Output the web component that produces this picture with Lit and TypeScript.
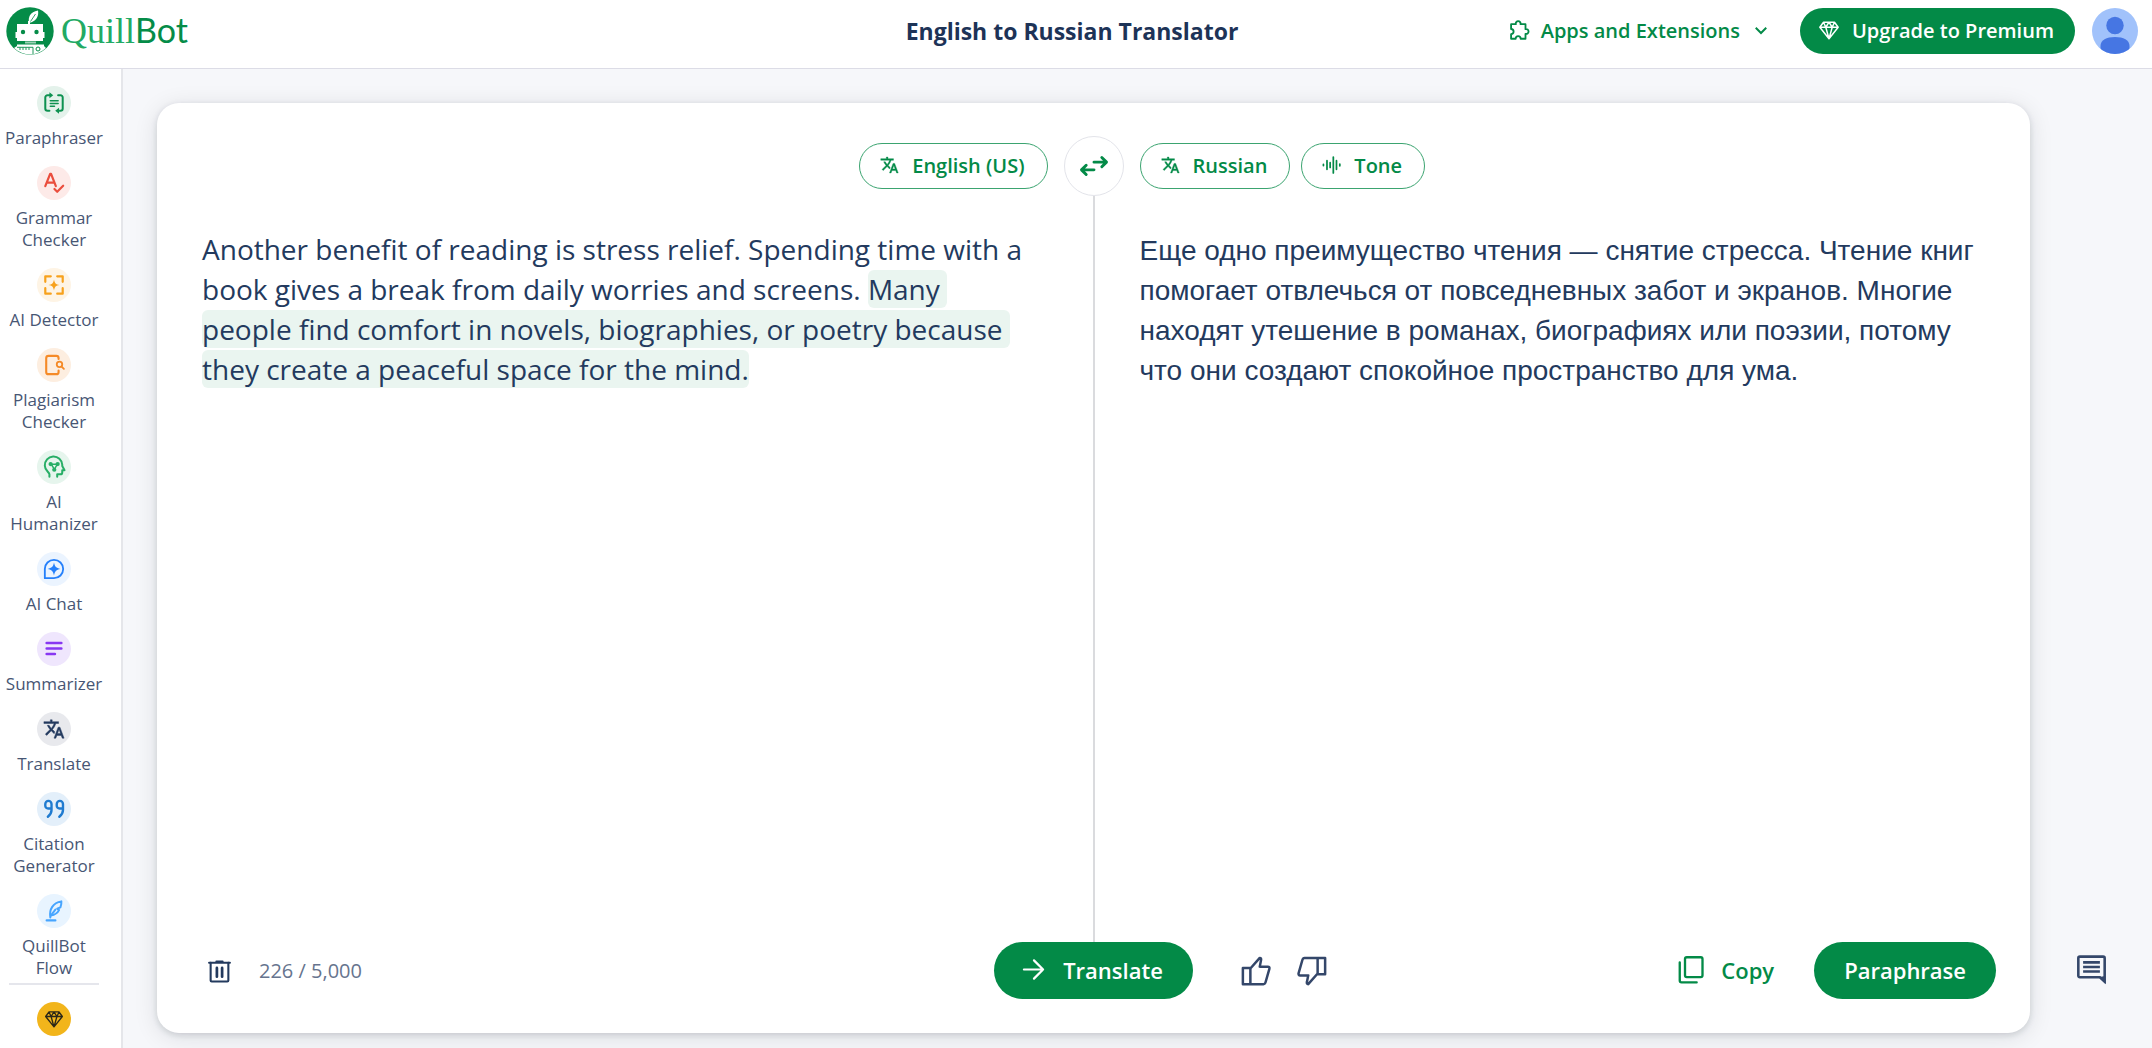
import { LitElement, html, css, svg, SVGTemplateResult } from "lit";
import { customElement, property } from "lit/decorators.js";
import { classMap } from "lit/directives/class-map.js";

const icons: Record<string, SVGTemplateResult> = {
  paraphrase: svg`<g fill="none" stroke="currentColor" stroke-width="2.200" stroke-linecap="round" stroke-linejoin="round"><path d="M8 3.500H5A2.500 2.500 0 0 0 2.500 6v12A2.500 2.500 0 0 0 5 20.500h2M16.500 3.500h2.500A2.500 2.500 0 0 1 21.500 6v12a2.500 2.500 0 0 1-2.500 2.500h-2"/><path d="M8 9.500h8.500M8 12.500h8.500M8 15.500h4.500" stroke-width="1.700"/></g><path d="M7 .2l4.200 3.300L7 6.800zM17.500 17.200l-4.200 3.300 4.200 3.300z" fill="currentColor"/>`,
  grammar: svg`<g fill="none" stroke="currentColor" stroke-width="2.400" stroke-linecap="round" stroke-linejoin="round"><path d="M2.500 15.500L7.800 2h1l5.200 13.500M4.500 11.500h7.500"/><path d="M12.500 18.500l3 3 6.500-6.500"/></g>`,
  detector: svg`<path d="M2.500 8.500v-6h6M15.500 2.500h6v6M21.500 15.500v6h-6M8.500 21.500h-6v-6" fill="none" stroke="currentColor" stroke-width="2.400" stroke-linejoin="round" stroke-linecap="round"/><path d="M12 6c.7 4 2 5.300 6 6-4 .7-5.300 2-6 6-.7-4-2-5.300-6-6 4-.7 5.300-2 6-6z" fill="currentColor"/>`,
  plagiarism: svg`<g fill="none" stroke="currentColor" stroke-width="2.300" stroke-linecap="round"><path d="M17 5.500V4.500A2.500 2.500 0 0 0 14.500 2H6a2.500 2.500 0 0 0-2.500 2.500v15A2.500 2.500 0 0 0 6 22h8.500a2.500 2.500 0 0 0 2.500-2.500v-1.500"/><circle cx="18" cy="11.300" r="3" stroke-width="2"/><path d="M20.300 13.700l2.500 2.500" stroke-width="2"/></g>`,
  humanizer: svg`<g fill="none" stroke="currentColor" stroke-width="2.200" stroke-linecap="round" stroke-linejoin="round"><path d="M7 22.500V20c0-2.500-5-4-5-9.500a9.500 9.500 0 0 1 19-1L21 11l2.500 4.500H21V18a2 2 0 0 1-2 2h-3.500v2.500"/><path d="M9 9h6.500M9 9l3.500 5.500 3-5.500" stroke-width="1.600"/></g><g fill="currentColor"><circle cx="8.300" cy="8.800" r="2.300"/><circle cx="16" cy="8.800" r="2.300"/><circle cx="12.300" cy="15" r="2.300"/></g>`,
  chat: svg`<path d="M2 22V12a10 10 0 1 1 10 10z" fill="none" stroke="currentColor" stroke-width="2" stroke-linejoin="round"/><path d="M12 5c1 4.600 2.400 6 7 7-4.600 1-6 2.400-7 7-1-4.600-2.400-6-7-7 4.600-1 6-2.400 7-7z" fill="currentColor"/>`,
  summarize: svg`<path d="M4 5.500h16M4 11.500h16M4 17.500h9" fill="none" stroke="currentColor" stroke-width="2.800" stroke-linecap="round"/>`,
  translate: svg`<path fill="currentColor" stroke="currentColor" stroke-width=".5" d="M12.870 15.070l-2.540-2.510.03-.03A17.520 17.520 0 0 0 14.070 6H17V4h-7V2H8v2H1v1.990h11.170C11.500 7.920 10.440 9.750 9 11.350 8.070 10.320 7.300 9.190 6.690 8h-2c.73 1.630 1.730 3.170 2.980 4.560l-5.090 5.020L4 19l5-5 3.110 3.110.76-2.040zM18.500 10h-2L12 22h2l1.120-3h4.750L21 22h2l-4.500-12zm-2.620 7l1.620-4.330L19.120 17h-3.240z"/>`,
  cite: svg`<g fill="none" stroke="currentColor" stroke-width="2.600" stroke-linecap="round"><path d="M9 11.500H5.500a3 3 0 0 1-3-3V6.500a3.300 3.300 0 0 1 6.800 0V13c0 4-1.500 5.500-4 7.500"/><path d="M21.500 11.500H18a3 3 0 0 1-3-3V6.500a3.300 3.300 0 0 1 6.800 0V13c0 4-1.500 5.500-4 7.500"/></g>`,
  flow: svg`<g fill="none" stroke="currentColor" stroke-width="2.200" stroke-linecap="round" stroke-linejoin="round"><path d="M8 19C6.500 10 11 3 20 1.500c.3 3-.2 4.500-1 6.500L15.500 9.500l2 1.500c-1.500 3-4 5-9 6"/><path d="M8.500 17l5-6.500"/><path d="M4 22.300h9.500" stroke-width="2.400"/></g>`,
  diamond: svg`<path d="M6 3.500h12l4 5.500-10 12.500L2 9zM2 9h20M6 3.500L8.500 9 12 3.500 15.500 9 18 3.500M8.500 9l3.500 12.500L15.500 9" fill="none" stroke="currentColor" stroke-width="1.600" stroke-linejoin="round"/>`,
  puzzle: svg`<path d="M2.500 5h5.700a2.900 2.900 0 1 1 5.600 0h6v6a2.900 2.900 0 1 1 0 5.600V22.500H14c0-4.300-6-4.300-6 0H2.500V17c4-.2 4-6 0-6.200z" fill="none" stroke="currentColor" stroke-width="2.200" stroke-linejoin="round"/>`,
  chevron: svg`<path d="M5 9l7 7 7-7" fill="none" stroke="currentColor" stroke-width="2.600"/>`,
  swap: svg`<path d="M12 8.700h10.500M18.700 4.700l4 4-4 4M12 15.300H1.500M5.300 11.300l-4 4 4 4" fill="none" stroke="currentColor" stroke-width="2.500" stroke-linecap="round" stroke-linejoin="round"/>`,
  tone: svg`<path d="M1.800 11.300v1.400M6.300 6.500v11M10.300 9v6M14.300 2v20M18.300 6.500v11M22.500 11v2" fill="none" stroke="currentColor" stroke-width="2.200" stroke-linecap="round"/>`,
  trash: svg`<g fill="none" stroke="currentColor" stroke-width="2" stroke-linejoin="round" stroke-linecap="round"><path d="M2 4h20M9 3h6"/><path d="M3.500 4v17a1 1 0 0 0 1 1h15a1 1 0 0 0 1-1V4"/><path d="M9.500 9v8.500M14.500 9v8.500" stroke-width="2.600"/></g>`,
  arrow: svg`<path d="M2 12h20M12.500 2.500L22 12l-9.500 9.500" fill="none" stroke="currentColor" stroke-width="2.300" stroke-linecap="round" stroke-linejoin="round"/>`,
  up: svg`<path d="M1.500 9.500h6v13h-6zM7.500 10L15 1.500c1 0 1.300.7 1 2L15 8.500h6.500c1 0 1.500.8 1.200 1.800l-3 10.500c-.3 1.100-.7 1.700-1.700 1.700H7.500z" fill="none" stroke="currentColor" stroke-width="2" stroke-linejoin="round"/>`,
  copy: svg`<path d="M7.500 1.500h12a1.500 1.500 0 0 1 1.500 1.500v14a1.500 1.500 0 0 1-1.500 1.500h-12A1.500 1.500 0 0 1 6 17V3a1.500 1.500 0 0 1 1.500-1.500zM1.500 6v15.500A1.500 1.500 0 0 0 3 23h13" fill="none" stroke="currentColor" stroke-width="2" stroke-linecap="round"/>`,
  comment: svg`<path d="M3 2h18a1.200 1.200 0 0 1 1.200 1.200v18L18.500 18H3a1.200 1.200 0 0 1-1.200-1.200V3.200A1.200 1.200 0 0 1 3 2z" fill="none" stroke="currentColor" stroke-width="2"/><path d="M22.500 17v6l-5-5z" fill="currentColor"/><path d="M5.500 6.500h13M5.500 10h13M5.500 13.500h13" stroke="currentColor" stroke-width="2"/>`,
};

@customElement("qb-icon")
class QbIcon extends LitElement {
  static styles = css`
    :host { display: inline-flex; flex: none; width: 24px; height: 24px; }
    .glyph { width: 100%; height: 100%; overflow: visible; }
  `;
  @property() name = "";
  render() {
    return html`<svg class="glyph" viewBox="0 0 24 24" aria-hidden="true">${icons[this.name]}</svg>`;
  }
}

const tools = [
  { id: "paraphrase", lines: ["Paraphraser"] },
  { id: "grammar", lines: ["Grammar", "Checker"] },
  { id: "detector", lines: ["AI Detector"] },
  { id: "plagiarism", lines: ["Plagiarism", "Checker"] },
  { id: "humanizer", lines: ["AI", "Humanizer"] },
  { id: "chat", lines: ["AI Chat"] },
  { id: "summarize", lines: ["Summarizer"] },
  { id: "translate", lines: ["Translate"] },
  { id: "cite", lines: ["Citation", "Generator"] },
  { id: "flow", lines: ["QuillBot", "Flow"] },
];

@customElement("app-root")
class AppRoot extends LitElement {
  static styles = css`
    :host {
      --green: #038a47;
      --navy: #233a5e;
      display: flex; flex-direction: column; height: 100vh; overflow: hidden;
      font-family: "Open Sans", "Noto Sans", sans-serif; color: var(--navy); background: #f6f7fa;
    }
    * { box-sizing: border-box; }
    button { font: inherit; color: inherit; background: none; border: 0; padding: 0; margin: 0; cursor: pointer; display: inline-flex; align-items: center; justify-content: center; }
    a { color: inherit; text-decoration: none; }

    .header { flex: none; display: grid; grid-template-columns: 1fr auto 1fr; align-items: center; height: 69px; padding: 0 14px 6px 6px; background: #fff; border-bottom: 1px solid #dcdce6; }
    .brand { display: flex; align-items: center; gap: 7px; }
    .mark { width: 48px; height: 48px; }
    .word { display: flex; align-items: baseline; line-height: 44px; padding-bottom: 2px; }
    .quill { font-family: "Liberation Serif", serif; font-size: 36px; color: #22aa64; }
    .bot { font-family: Lato, sans-serif; font-size: 34px; color: #058c48; }
    .title { margin: 0; font-size: 23px; line-height: 32px; font-weight: 700; color: #1d3357; }
    .account { display: flex; align-items: center; justify-content: flex-end; }
    .apps { gap: 12px; padding-bottom: 2px; margin-right: 30px; font-size: 20px; font-weight: 600; color: var(--green); }
    .apps-icon { width: 20px; height: 22px; }
    .chevron { width: 18px; height: 18px; }
    .solid { background: var(--green); color: #fff; font-weight: 600; border-radius: 32px; }
    .upgrade { height: 46px; padding: 0 21px 2px 18px; gap: 12px; font-size: 20px; margin-right: 17px; }
    .upgrade-icon { width: 22px; height: 22px; }
    .avatar { width: 46px; height: 46px; border-radius: 50%; overflow: hidden; }

    .page { flex: 1; min-height: 0; display: grid; grid-template-columns: 123px minmax(0, 1fr); }
    .side { display: flex; flex-direction: column; background: #fff; border-right: 2px solid #e5e6ea; padding: 17px 13px 0 0; overflow: hidden; }
    .tool { display: flex; flex-direction: column; align-items: center; gap: 7px; padding-bottom: 17px; font-size: 17px; line-height: 22px; color: #475674; text-align: center; }
    .tool:last-of-type { padding-bottom: 4px; }
    .line { display: block; }
    .disc { display: flex; align-items: center; justify-content: center; width: 34px; height: 34px; border-radius: 50%; flex: none; }
    .disc-icon { width: 22px; height: 22px; }
    .paraphrase { color: #0d9150; background: #e4f2eb; }
    .grammar { color: #ea4d3d; background: #fdeae8; }
    .detector { color: #f7a11c; background: #fef4e5; }
    .plagiarism { color: #f58a27; background: #fdeee0; }
    .humanizer { color: #27ae66; background: #e6f5ed; }
    .chat { color: #2580fb; background: #ebf4ff; }
    .summarize { color: #8837f2; background: #efe6fd; }
    .translate { color: #233a5e; background: #e8e9ed; }
    .cite { color: #1f7bd0; background: #e3effa; }
    .flow { color: #47a5ff; background: #e8f4ff; }
    .rule { width: 90px; height: 2px; border: 0; margin: 0 0 17px; background: #e5e6ec; align-self: center; flex: none; }
    .premium { background: #f2b51b; color: #2b2718; align-self: center; }
    .premium-icon { width: 20px; height: 20px; }

    .main { display: grid; grid-template-columns: minmax(0, 1fr) 122px; padding: 34px 0 15px 34px; }
    .card { display: flex; flex-direction: column; background: #fff; border-radius: 22px; box-shadow: 0 4px 24px rgba(20, 30, 40, .11), 0 2px 6px rgba(20, 30, 40, .14); min-height: 0; }
    .bar { display: grid; grid-template-columns: 1fr auto 1fr; align-items: center; padding-top: 33px; }
    .langs { display: flex; gap: 11px; padding: 0 16px; }
    .from { justify-content: flex-end; }
    .pill { height: 46px; padding: 0 22px 2px 20px; gap: 13px; border: 1px solid #3ba470; border-radius: 24px; color: var(--green); font-size: 20px; font-weight: 600; }
    .pill-icon { width: 19px; height: 20px; }
    .swap { width: 60px; height: 60px; border: 1px solid #e3e4ea; border-radius: 50%; color: var(--green); }
    .swap-icon { width: 28px; height: 28px; }
    .panes { flex: 1; min-height: 0; display: grid; grid-template-columns: minmax(0, 1fr) 2px minmax(0, 1fr); }
    .divider { background: #dadbde; }
    .text { margin: 0; padding: 33px 48px 0 45px; font-size: 28px; line-height: 40px; white-space: pre-wrap; outline: none; }
    .source { padding-right: 60px; }
    .target { padding-top: 35px; font-family: "Liberation Sans", Arial, sans-serif; }
    .active { color: inherit; background: #eaf5f0; border-radius: 6px; -webkit-box-decoration-break: clone; box-decoration-break: clone; }
    .foot { display: grid; grid-template-columns: 1fr auto 1fr; align-items: center; padding: 0 34px 34px; }
    .foot-side { display: flex; align-items: center; }
    .big { height: 57px; font-size: 22px; padding-bottom: 2px; }
    .go { padding: 0 30px 2px 28px; gap: 18px; }
    .go-icon { width: 23px; height: 23px; }
    .trash { padding: 0 5px 0 16px; }
    .trash-icon { width: 25px; height: 28px; }
    .count { margin-left: 22px; font-size: 20px; line-height: 28px; color: #66748e; }
    .rate { display: flex; gap: 26px; margin-left: 48px; color: #34476a; }
    .rate-icon { width: 30px; height: 30px; }
    .down { transform: rotate(180deg); }
    .result { display: flex; margin-left: auto; gap: 40px; }
    .copy { gap: 15px; font-weight: 600; color: var(--green); }
    .copy-icon { width: 28px; height: 29px; }
    .para { padding: 0 30px 2px; }
    .rail { display: flex; align-items: flex-end; justify-content: center; padding-bottom: 48px; }
    .comment-icon { width: 31px; height: 31px; color: #34476a; }
  `;

  render() {
    return html`
      <header class="header">
        <a class="brand" href="#home" aria-label="QuillBot home">
          <svg class="mark" viewBox="0 0 48 48" aria-hidden="true">
            <circle cx="24" cy="24" r="23.700" fill="#058c48" />
            <path d="M11 17h11v-3h2v3h13v8h1.500v6H37v3H11v-3H9.500v-6H11z" fill="#fff" />
            <path d="M23 15.500c-1-5.500 1-10.500 9-12 1 5-1.500 10-7 12z" fill="#fff" />
            <path d="M24.500 14.500l5-7.500" stroke="#058c48" stroke-width=".8" />
            <circle cx="17" cy="25" r="2.200" fill="#058c48" /><circle cx="30.500" cy="25" r="2.200" fill="#058c48" />
            <path d="M19 34.500h11v2H19z" fill="#fff" opacity=".6" />
            <path d="M11 37.500h27v1.500l2 2c-9 8.500-23 8.500-32 0l3-2z" fill="#fff" />
            <path d="M11 40.300h16V47M14 40.500v2.500M17 40.500v2.500M20 40.500v2.500M23 40.500v2.500" fill="none" stroke="#058c48" stroke-width=".9" />
            <circle cx="32" cy="42" r="2" fill="none" stroke="#058c48" stroke-width="1" />
          </svg>
          <span class="word"><span class="quill">Quill</span><span class="bot">Bot</span></span>
        </a>
        <h1 class="title">English to Russian Translator</h1>
        <div class="account">
          <button class="apps"><qb-icon class="apps-icon" name="puzzle"></qb-icon>Apps and Extensions<qb-icon class="chevron" name="chevron"></qb-icon></button>
          <button class="solid upgrade"><qb-icon class="upgrade-icon" name="diamond"></qb-icon>Upgrade to Premium</button>
          <button class="avatar" aria-label="Account">
            <svg viewBox="0 0 46 46" width="46" height="46" aria-hidden="true"><path d="M0 0h46v46H0z" fill="#a1c2fb" /><circle cx="23" cy="17.500" r="8.700" fill="#4676e3" /><path d="M8.500 46V38c0-6 6-9 14.500-9s14.500 3 14.500 9v8z" fill="#4676e3" /></svg>
          </button>
        </div>
      </header>
      <div class="page">
        <nav class="side" aria-label="Tools">
          ${tools.map((t) => html`
            <a class="tool" href="#${t.id}">
              <span class="disc ${classMap({ [t.id]: true })}"><qb-icon class="disc-icon" name=${t.id}></qb-icon></span>
              <span>${t.lines.map((l) => html`<span class="line">${l}</span>`)}</span>
            </a>`)}
          <hr class="rule" />
          <button class="disc premium" aria-label="Premium"><qb-icon class="premium-icon" name="diamond"></qb-icon></button>
        </nav>
        <main class="main">
          <section class="card">
            <div class="bar">
              <div class="langs from"><button class="pill"><qb-icon class="pill-icon" name="translate"></qb-icon>English (US)</button></div>
              <button class="swap" aria-label="Swap languages"><qb-icon class="swap-icon" name="swap"></qb-icon></button>
              <div class="langs">
                <button class="pill"><qb-icon class="pill-icon" name="translate"></qb-icon>Russian</button>
                <button class="pill"><qb-icon class="pill-icon" name="tone"></qb-icon>Tone</button>
              </div>
            </div>
            <div class="panes">
              <div class="text source" role="textbox" aria-multiline="true" aria-label="Source text" contenteditable="true" spellcheck="false">Another benefit of reading is stress relief. Spending time with a book gives a break from daily worries and screens. <mark class="active">Many people find comfort in novels, biographies, or poetry because they create a peaceful space for the mind.</mark></div>
              <div class="divider"></div>
              <p class="text target" lang="ru">Еще одно преимущество чтения — снятие стресса. Чтение книг помогает отвлечься от повседневных забот и экранов. Многие находят утешение в романах, биографиях или поэзии, потому что они создают спокойное пространство для ума.</p>
            </div>
            <div class="foot">
              <div class="foot-side">
                <button class="trash" aria-label="Clear text"><qb-icon class="trash-icon" name="trash"></qb-icon></button>
                <span class="count">226 / 5,000</span>
              </div>
              <button class="solid big go"><qb-icon class="go-icon" name="arrow"></qb-icon>Translate</button>
              <div class="foot-side">
                <div class="rate">
                  <button aria-label="Good translation"><qb-icon class="rate-icon" name="up"></qb-icon></button>
                  <button aria-label="Bad translation"><qb-icon class="rate-icon down" name="up"></qb-icon></button>
                </div>
                <div class="result">
                  <button class="big copy"><qb-icon class="copy-icon" name="copy"></qb-icon>Copy</button>
                  <button class="solid big para">Paraphrase</button>
                </div>
              </div>
            </div>
          </section>
          <aside class="rail"><button aria-label="Feedback"><qb-icon class="comment-icon" name="comment"></qb-icon></button></aside>
        </main>
      </div>
    `;
  }
}
